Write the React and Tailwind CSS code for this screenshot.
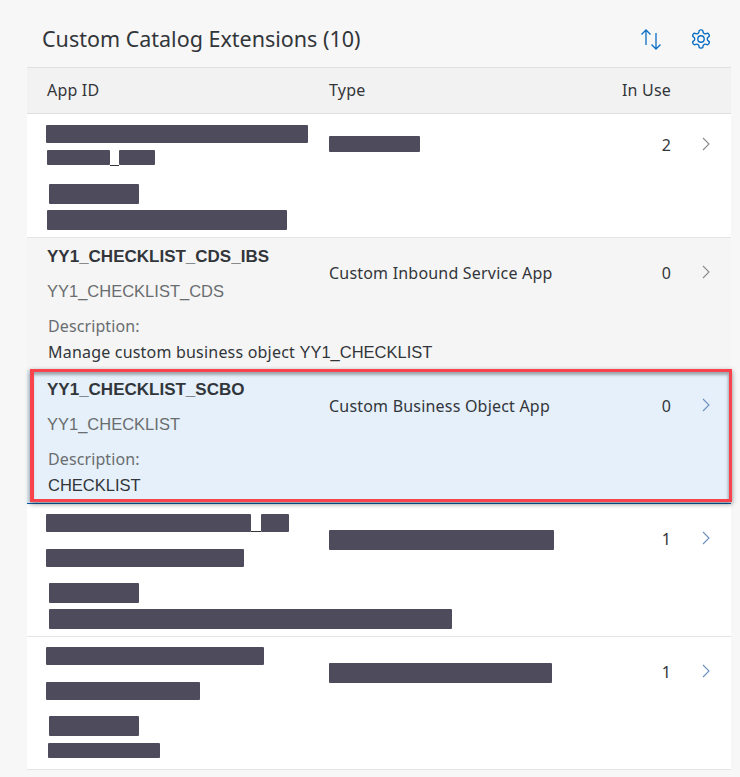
import React from "react";

function Bar({ className = "" }) {
  return <div className={"bg-[#4d4b5c] rounded-[1px] " + className} />;
}

function Chevron({ className = "" }) {
  return (
    <svg width="10" height="14" viewBox="0 0 10 14" fill="none" className={className}>
      <path d="M2 1 L8 7 L2 13" stroke="currentColor" strokeWidth="1.1" />
    </svg>
  );
}

function Row({ left, type, count, className = "", chevron = "text-[#8a8a8a]", countClass = "mt-[23px]", typeClass = "" }) {
  return (
    <div className={"flex border-b border-[#e5e5e5] " + className}>
      <div className="w-[302px] shrink-0">{left}</div>
      <div className={"w-[280px] shrink-0 " + typeClass}>{type}</div>
      <div className={"w-[62px] shrink-0 text-right text-[16px] leading-[22px] text-[#32363a] " + countClass}>{count}</div>
      <div className={"ml-[30px] " + countClass}>
        <Chevron className={"mt-[3px] " + chevron} />
      </div>
    </div>
  );
}

const caps = "font-['Liberation_Sans',sans-serif] tracking-normal";

function TextLeft({ id, sub, desc }) {
  return (
    <div className="pl-[20px]">
      <div className={"mt-[8px] text-[17px] leading-[22px] font-bold text-[#32363a] " + caps}>{id}</div>
      <div className={"mt-[12px] text-[16.500px] leading-[22px] text-[#6a6d70] " + caps}>{sub}</div>
      <div className="mt-[13px] pl-[1px] text-[16px] leading-[22px] text-[#6a6d70] tracking-[0.1px]">Description:</div>
      <div className="mt-[4px] pl-[1px] text-[16px] leading-[22px] text-[#32363a] tracking-[0.2px] whitespace-nowrap">{desc}</div>
    </div>
  );
}

export default function App() {
  return (
    <div className="relative w-[740px] h-[777px] overflow-hidden bg-[#f7f7f7] font-['Noto_Sans','Open_Sans',sans-serif]">
      <div className="ml-[27px] w-[704px]">
        <div className="flex items-center h-[67px] pl-[15px]">
          <div className="text-[21.500px] leading-[28px] text-[#32363a] mt-[11px]">Custom Catalog Extensions (10)</div>
          <div className="ml-auto flex items-center mt-[11px] text-[#0a6ec4]">
            <svg width="22" height="22" viewBox="0 0 22 22" fill="none" stroke="currentColor" strokeWidth="1.3">
              <path d="M6 17 V2 M1.500 6.500 L6 2 L10.500 6.500" />
              <path d="M16 5 V21 M11.500 16.500 L16 21 L20.500 16.500" />
            </svg>
            <svg className="ml-[28px] mr-[19px]" width="22" height="22" viewBox="0 0 24 24" fill="none" stroke="currentColor" strokeWidth="1.5" strokeLinecap="round" strokeLinejoin="round">
              <path d="M12.22 2h-.44a2 2 0 0 0-2 2v.18a2 2 0 0 1-1 1.73l-.43.25a2 2 0 0 1-2 0l-.15-.08a2 2 0 0 0-2.73.73l-.22.38a2 2 0 0 0 .73 2.73l.15.1a2 2 0 0 1 1 1.72v.51a2 2 0 0 1-1 1.74l-.15.09a2 2 0 0 0-.73 2.73l.22.38a2 2 0 0 0 2.73.73l.15-.08a2 2 0 0 1 2 0l.43.25a2 2 0 0 1 1 1.73V20a2 2 0 0 0 2 2h.44a2 2 0 0 0 2-2v-.18a2 2 0 0 1 1-1.73l.43-.25a2 2 0 0 1 2 0l.15.08a2 2 0 0 0 2.73-.73l.22-.39a2 2 0 0 0-.73-2.73l-.15-.08a2 2 0 0 1-1-1.74v-.5a2 2 0 0 1 1-1.74l.15-.09a2 2 0 0 0 .73-2.73l-.22-.38a2 2 0 0 0-2.73-.73l-.15.08a2 2 0 0 1-2 0l-.43-.25a2 2 0 0 1-1-1.73V4a2 2 0 0 0-2-2z" />
              <circle cx="12" cy="12" r="3.500" />
            </svg>
          </div>
        </div>

        <div className="flex items-center h-[47px] pb-[2px] bg-[#f2f2f2] border-y border-[#e0e0e0] text-[16px] text-[#32363a] tracking-[0.2px]">
          <div className="w-[302px] pl-[20px]">App ID</div>
          <div className="w-[280px]">Type</div>
          <div className="w-[62px] text-right">In Use</div>
        </div>

        <Row
          className="bg-white h-[124px]"
          count="2"
          countClass="mt-[20px]"
          left={
            <div>
              <Bar className="ml-[19px] mt-[11px] w-[262px] h-[18px]" />
              <div className="ml-[20px] mt-[7px] flex items-end">
                <Bar className="w-[63px] h-[15px]" />
                <div className="w-[9px] h-px bg-[#32363a] translate-y-px" />
                <Bar className="w-[36px] h-[15px]" />
              </div>
              <Bar className="ml-[22px] mt-[19px] w-[90px] h-[20px]" />
              <Bar className="ml-[20px] mt-[6px] w-[240px] h-[20px]" />
            </div>
          }
          type={<Bar className="mt-[22px] w-[91px] h-[16px]" />}
        />

        <Row
          className="h-[133px] bg-[#f5f5f5]"
          count="0"
          countClass="mt-[24px]"
          left={
            <TextLeft
              id="YY1_CHECKLIST_CDS_IBS"
              sub="YY1_CHECKLIST_CDS"
              desc={<>Manage custom business object <span className={"text-[16.500px] " + caps}>YY1_CHECKLIST</span></>}
            />
          }
          type={<div className="mt-[24px] text-[16px] leading-[22px] text-[#32363a] tracking-[0.2px]">Custom Inbound Service App</div>}
        />

        <Row
          className="h-[133px] bg-[#e5f0fa] border-b-[#0a5fb0]"
          count="0"
          countClass="mt-[24px]"
          chevron="text-[#6b8fc0]"
          left={<TextLeft id="YY1_CHECKLIST_SCBO" sub="YY1_CHECKLIST" desc={<span className={"text-[16.500px] " + caps}>CHECKLIST</span>} />}
          type={<div className="mt-[24px] text-[16px] leading-[22px] text-[#32363a] tracking-[0.2px]">Custom Business Object App</div>}
        />

        <Row
          className="bg-white h-[133px]"
          count="1"
          countClass="mt-[24px]"
          chevron="text-[#6b8fc0]"
          left={
            <div>
              <div className="ml-[19px] mt-[10px] flex items-end">
                <Bar className="w-[205px] h-[18px]" />
                <div className="w-[10px] h-px bg-[#32363a]" />
                <Bar className="w-[28px] h-[18px]" />
              </div>
              <Bar className="ml-[19px] mt-[17px] w-[198px] h-[18px]" />
              <Bar className="ml-[22px] mt-[16px] w-[90px] h-[20px]" />
              <Bar className="ml-[22px] mt-[6px] w-[403px] h-[20px]" />
            </div>
          }
          type={<Bar className="mt-[26px] w-[225px] h-[20px]" />}
        />

        <Row
          className="bg-white h-[133px]"
          count="1"
          countClass="mt-[24px]"
          chevron="text-[#6b8fc0]"
          left={
            <div>
              <Bar className="ml-[19px] mt-[10px] w-[218px] h-[18px]" />
              <Bar className="ml-[19px] mt-[17px] w-[154px] h-[18px]" />
              <Bar className="ml-[22px] mt-[16px] w-[90px] h-[20px]" />
              <Bar className="ml-[21px] mt-[7px] w-[112px] h-[15px]" />
            </div>
          }
          type={<Bar className="mt-[26px] w-[223px] h-[20px]" />}
        />
      </div>

      <div className="absolute left-[30px] top-[369px] w-[702px] h-[133px] border-[3px] border-l-[4px] border-[#f8434d] shadow-[0_2px_5px_rgba(0,0,0,0.45),inset_-1px_3px_3px_rgba(0,0,0,0.3)] pointer-events-none" />
    </div>
  );
}
